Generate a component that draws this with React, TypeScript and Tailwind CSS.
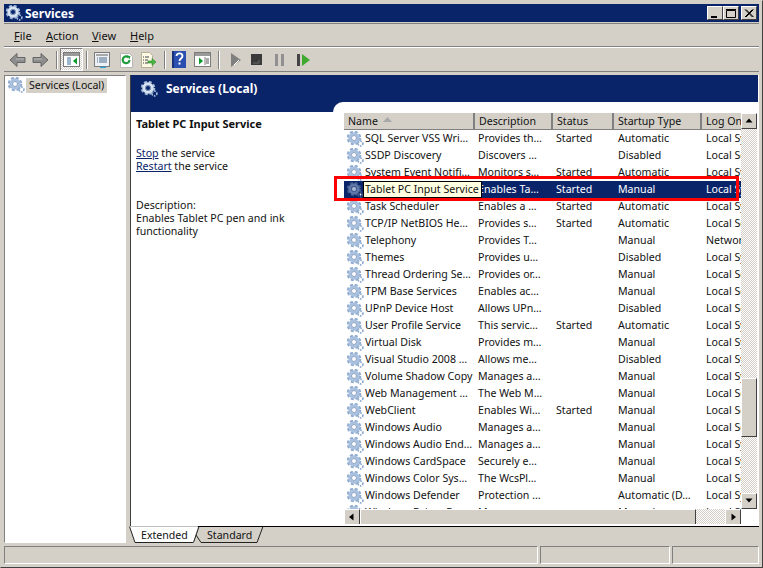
import React from "react";

const FONT = "font-['Noto_Sans','Liberation_Sans',sans-serif]";

type Row = [string, string, string, string, string];
const rows: Row[] = [
  ["SQL Server VSS Wri…", "Provides th…", "Started", "Automatic", "Local System"],
  ["SSDP Discovery", "Discovers …", "", "Disabled", "Local Service"],
  ["System Event Notifi…", "Monitors s…", "Started", "Automatic", "Local System"],
  ["Tablet PC Input Service", "Enables Ta…", "Started", "Manual", "Local System"],
  ["Task Scheduler", "Enables a …", "Started", "Automatic", "Local System"],
  ["TCP/IP NetBIOS He…", "Provides s…", "Started", "Automatic", "Local Service"],
  ["Telephony", "Provides T…", "", "Manual", "Network S"],
  ["Themes", "Provides u…", "", "Disabled", "Local System"],
  ["Thread Ordering Se…", "Provides or…", "", "Manual", "Local Service"],
  ["TPM Base Services", "Enables ac…", "", "Manual", "Local Service"],
  ["UPnP Device Host", "Allows UPn…", "", "Disabled", "Local Service"],
  ["User Profile Service", "This servic…", "Started", "Automatic", "Local System"],
  ["Virtual Disk", "Provides m…", "", "Manual", "Local System"],
  ["Visual Studio 2008 …", "Allows me…", "", "Disabled", "Local System"],
  ["Volume Shadow Copy", "Manages a…", "", "Manual", "Local System"],
  ["Web Management …", "The Web M…", "", "Manual", "Local Service"],
  ["WebClient", "Enables Wi…", "Started", "Manual", "Local Service"],
  ["Windows Audio", "Manages a…", "", "Manual", "Local Service"],
  ["Windows Audio End…", "Manages a…", "", "Manual", "Local System"],
  ["Windows CardSpace", "Securely e…", "", "Manual", "Local System"],
  ["Windows Color Sys…", "The WcsPl…", "", "Manual", "Local Service"],
  ["Windows Defender", "Protection …", "", "Automatic (D…", "Local System"],
  ["Windows Driver Fou…", "Manages …", "", "Manual", "Local System"],
];

function Gear({ tone = "light" }: { tone?: "light" | "dark" | "head" }) {
  const a = tone === "dark" ? "#3f5687" : tone === "head" ? "#9db7d6" : "#8fabcf";
  const b = tone === "dark" ? "#5f76a8" : tone === "head" ? "#d6e2f0" : "#a9c1de";
  const inner = tone === "dark" ? "#aab8d4" : tone === "head" ? "#0a246a" : "#ffffff";
  return (
    <svg width="17" height="16" viewBox="0 0 17 16" className="shrink-0">
      <circle cx="7" cy="7" r="6.2" fill="none" stroke={a} strokeWidth="2.2" strokeDasharray="3 1.87" />
      <circle cx="7" cy="7" r="4.2" fill="none" stroke={b} strokeWidth="3" />
      <circle cx="7" cy="7" r="2.5" fill={inner} stroke={tone === "light" ? "#6f8db5" : a} strokeWidth="0.8" />
      <circle cx="13.5" cy="12.5" r="2.4" fill="none" stroke={a} strokeWidth="1.7" strokeDasharray="1.5 1" />
      <circle cx="13.5" cy="12.5" r="0.9" fill={tone === "head" ? "#0a246a" : "#fff"} />
    </svg>
  );
}

function WinBtn({ kind }: { kind: "min" | "max" | "close" }) {
  return (
    <div className="flex h-[14px] w-[16px] items-center justify-center border border-b-[#404040] border-l-white border-r-[#404040] border-t-white bg-[#d4d0c8]">
      <svg width="12" height="11" viewBox="0 0 12 11">
        {kind === "min" && <rect x="2" y="8" width="6" height="2" fill="#000" />}
        {kind === "max" && <path d="M1.5 2.5h9v7h-9z M1 1.5h10" fill="none" stroke="#000" />}
        {kind === "close" && <path d="M2 1.5l7.5 7.5M3 1.5l7.5 7.5M9.5 1.5L2 9M10.5 1.5L3 9" stroke="#000" fill="none" />}
      </svg>
    </div>
  );
}

function Sep({ ml }: { ml: string }) {
  return <div className={`h-[18px] w-[2px] border-l border-r border-l-[#808080] border-r-white ${ml}`} />;
}

function Arrow({ right = false }: { right?: boolean }) {
  return (
    <svg width="17" height="16" viewBox="0 0 17 16" className="shrink-0">
      <path
        d={right ? "M1 5.5h8V1.5l7 6.5-7 6.5v-4H1z" : "M16 5.5H8V1.5L1 8l7 6.5v-4h8z"}
        fill="#8d8d8d"
        stroke="#666"
      />
      <path d={right ? "M2 7h8" : "M15 7H7"} stroke="#b8b8b8" />
    </svg>
  );
}

function ListPaneIcon({ green = "left" }: { green?: "left" | "mid" }) {
  return (
    <svg width="17" height="15" viewBox="0 0 17 15" className="shrink-0">
      <rect x="0.5" y="0.5" width="16" height="14" fill="#fff" stroke="#7a7a7a" />
      <rect x="1" y="1" width="15" height="3" fill="#9a9a9a" />
      {green === "left" ? (
        <>
          <path d="M4 6h4M4 8h4M4 10h4M4 12h4" stroke="#3d6f9e" />
          <path d="M14 5.5v7l-4-3.5z" fill="#0d9b2c" />
        </>
      ) : (
        <>
          <path d="M5 5.5v7l4-3.5z" fill="#0d9b2c" />
          <path d="M11 5v8" stroke="#7a7a7a" />
          <path d="M12 7h3M12 9h3M12 11h3" stroke="#555" />
        </>
      )}
    </svg>
  );
}

function Toolbar() {
  return (
    <div className="flex h-[25px] shrink-0 items-center border-b border-b-[#808080] border-t border-t-white bg-[#d4d0c8]">
      <div className="ml-[5px] flex items-center gap-[6px]">
        <Arrow />
        <Arrow right />
      </div>
      <Sep ml="ml-[7px]" />
      <div className="ml-[2px] flex h-[23px] w-[23px] items-center justify-center border border-b-white border-l-[#808080] border-r-white border-t-[#808080] bg-[repeating-conic-gradient(#d4d0c8_0_25%,#ffffff_0_50%)] bg-[length:2px_2px]">
        <ListPaneIcon />
      </div>
      <Sep ml="ml-[3px]" />
      <svg width="16" height="16" viewBox="0 0 16 16" className="ml-[6px] shrink-0">
        <rect x="0.5" y="0.5" width="15" height="14" fill="#eef1f5" stroke="#7a7a7a" />
        <rect x="2" y="2" width="12" height="2" fill="#a8a8a8" />
        <path d="M3 6h1M5 6h8M3 8h1M5 8h8M3 10h1M5 10h8" stroke="#4a6a8a" />
        <path d="M6 15.5h6" stroke="#2aa7d8" strokeWidth="1.5" />
      </svg>
      <svg width="15" height="16" viewBox="0 0 15 16" className="ml-[9px] shrink-0">
        <path d="M1.5 1.5h9l3 3v11h-12z" fill="#fff" stroke="#b6b6b6" />
        <path d="M10.5 8a3.4 3.4 0 1 1-1-2.6" fill="none" stroke="#1f9c3c" strokeWidth="2.2" />
        <path d="M8 3.5l3.5 0.5-1 3.5z" fill="#1f9c3c" />
      </svg>
      <svg width="17" height="16" viewBox="0 0 17 16" className="ml-[6px] shrink-0">
        <path d="M1.5 0.5h8l3 3v12h-11z" fill="#fbf8e3" stroke="#b8b090" />
        <path d="M3 5h1M5 5h4M3 8h1M5 8h3M3 11h1M5 11h3" stroke="#444" />
        <path d="M8 9h4V6.5l4 3.5-4 3.5V11H8z" fill="#47b53f" stroke="#2b8f2b" strokeWidth="0.6" />
      </svg>
      <Sep ml="ml-[7px]" />
      <svg width="14" height="17" viewBox="0 0 14 17" className="ml-[6px] shrink-0">
        <rect width="14" height="17" fill="#2a4fb0" />
        <rect x="0" y="0" width="2" height="17" fill="#16307a" />
        <path d="M4.5 5c0-3.5 6-3.5 6 0 0 2.5-3 2.5-3 5" fill="none" stroke="#fff" strokeWidth="1.8" />
        <rect x="6.5" y="11.5" width="2" height="2" fill="#fff" />
      </svg>
      <div className="ml-[8px]">
        <ListPaneIcon green="mid" />
      </div>
      <Sep ml="ml-[7px]" />
      <svg width="11" height="14" viewBox="0 0 11 14" className="ml-[11px] shrink-0">
        <path d="M0 0l10 7-10 7z" fill="#808080" />
        <path d="M8 7l-5 5" stroke="#fff" />
      </svg>
      <svg width="11" height="11" viewBox="0 0 11 11" className="ml-[9px] shrink-0">
        <rect width="11" height="11" fill="#3a3a3a" />
        <path d="M2 9h6M8 9V6" stroke="#6a6a6a" />
      </svg>
      <svg width="9" height="12" viewBox="0 0 9 12" className="ml-[13px] shrink-0">
        <rect width="3" height="12" fill="#909090" />
        <rect x="6" width="3" height="12" fill="#909090" />
      </svg>
      <svg width="13" height="12" viewBox="0 0 13 12" className="ml-[13px] shrink-0">
        <rect width="3" height="12" fill="#444" />
        <path d="M5 0l8 6-8 6z" fill="#3fa92f" />
      </svg>
    </div>
  );
}

function SbBtn({ dir }: { dir: "up" | "down" | "left" | "right" }) {
  const d = {
    up: "M4 1.5L0.5 5.5h7z",
    down: "M4 5.5L0.5 1.5h7z",
    left: "M1 4L5.5 0.5v7z",
    right: "M7 4L2.5 0.5v7z",
  }[dir];
  return (
    <div className="flex h-[16px] w-[16px] shrink-0 items-center justify-center border border-b-[#404040] border-l-white border-r-[#404040] border-t-white bg-[#d4d0c8]">
      <svg width="8" height="8" viewBox="0 0 8 8">
        <path d={d} fill="#000" />
      </svg>
    </div>
  );
}

const dither =
  "bg-[repeating-conic-gradient(#d4d0c8_0_25%,#ffffff_0_50%)] bg-[length:2px_2px]";
const cols = "grid grid-cols-[131px_78px_61px_88px_39px]";

function HeadCell({ children, sort }: { children: React.ReactNode; sort?: boolean }) {
  return (
    <div className="relative flex h-[17px] items-center overflow-hidden whitespace-nowrap border-b border-r-2 border-b-[#808080] border-r-[#808080] bg-[#d4d0c8] pl-[4px]">
      {children}
      {sort && (
        <svg width="9" height="5" viewBox="0 0 9 5" className="absolute left-[39px] top-[4px]">
          <path d="M4.5 0L9 5H0z" fill="#a8a8a8" />
        </svg>
      )}
    </div>
  );
}

function ServiceRow({ r }: { r: Row }) {
  const sel = r[0].startsWith("Tablet");
  return (
    <div className={`${cols} relative h-[17px] items-center whitespace-nowrap ${sel ? "bg-[#0a246a] text-white" : "text-[#111]"}`}>
      <div className="flex items-center gap-[1px] pl-[3px]">
        <Gear tone={sel ? "dark" : "light"} />
        {!sel && <span>{r[0]}</span>}
      </div>
      <div className="overflow-hidden pl-[3px]">{r[1]}</div>
      <div className="pl-[3px]">{r[2]}</div>
      <div className="pl-[4px]">{r[3]}</div>
      <div className="overflow-hidden pl-[4px]">{r[4]}</div>
    </div>
  );
}

export default function App() {
  return (
    <div className={`${FONT} flex h-[568px] w-[763px] flex-col overflow-hidden border-b border-l border-r border-t border-b-[#404040] border-l-[#d4d0c8] border-r-[#404040] border-t-[#d4d0c8] bg-[#d4d0c8] p-[3px] text-[10.6px] leading-[13px] text-[#111]`}>
      {/* title bar */}
      <div className="flex h-[18px] shrink-0 items-center bg-[#0a246a] pl-[2px] pr-[2px]">
        <Gear tone="head" />
        <span className="ml-[2px] text-[12px] font-bold text-white">Services</span>
        <div className="ml-auto flex items-center">
          <WinBtn kind="min" />
          <WinBtn kind="max" />
          <div className="ml-[2px]">
            <WinBtn kind="close" />
          </div>
        </div>
      </div>

      {/* menu */}
      <div className="mt-[1px] flex h-[24px] shrink-0 items-center border-b border-t border-b-[#808080] border-t-[#808080] bg-[#d4d0c8] pl-[10px] text-[11px] text-[#111]">
        <span className="w-[32px]"><u>F</u>ile</span>
        <span className="w-[46px]"><u>A</u>ction</span>
        <span className="w-[38px]"><u>V</u>iew</span>
        <span><u>H</u>elp</span>
      </div>

      <Toolbar />

      {/* body */}
      <div className="mt-[3px] flex min-h-0 flex-1">
        {/* tree */}
        <div className="h-[468px] w-[122px] shrink-0 border border-b-white border-l-[#808080] border-r-white border-t-[#808080] bg-white">
          <div className="flex items-center gap-[1px] pl-[3px] pt-[1px]">
            <Gear />
            <span className="bg-[#d4d0c8] px-[3px] py-[1px]">Services (Local)</span>
          </div>
        </div>

        {/* main */}
        <div className="ml-[4px] flex h-[468px] min-w-0 flex-1 flex-col">
          <div className="flex h-[451px] flex-col border-l border-r border-l-[#404040] border-r-white bg-white">
            <div className="flex h-[37px] shrink-0 items-start gap-[8px] bg-[#0a246a] pl-[10px] pt-[6px]">
              <Gear tone="head" />
              <span className="text-[12px] font-bold leading-[16px] text-white">Services (Local)</span>
            </div>
            <div className="flex min-h-0 flex-1">
              <div className="w-[202px] shrink-0 pl-[5px] pt-[5px]">
                <div className="text-[11px] font-bold">Tablet PC Input Service</div>
                <div className="mt-[17px]"><span className="text-[#0a246a] underline">Stop</span> the service</div>
                <div><span className="text-[#0a246a] underline">Restart</span> the service</div>
                <div className="mt-[26px]">Description:</div>
                <div>Enables Tablet PC pen and ink functionality</div>
              </div>
              <div className="relative z-10 -mt-[10px] min-w-0 flex-1 rounded-tl-[10px] bg-white pl-[11px] pt-[11px]">
                <div className="flex">
                  <div className="relative h-[411px] w-[397px] shrink-0 overflow-hidden">
                    <div className={cols}>
                      <HeadCell sort>Name</HeadCell>
                      <HeadCell>Description</HeadCell>
                      <HeadCell>Status</HeadCell>
                      <HeadCell>Startup Type</HeadCell>
                      <div className="flex h-[17px] items-center overflow-hidden whitespace-nowrap border-b border-b-[#808080] bg-[#d4d0c8] pl-[4px]">Log On As</div>
                    </div>
                    <div className="h-[379px] overflow-hidden">
                      {rows.map((r) => (
                        <ServiceRow key={r[0]} r={r} />
                      ))}
                    </div>
                    <div className="flex h-[15px] items-start">
                      <SbBtn dir="left" />
                      <div className="h-[16px] w-[336px] border border-b-[#404040] border-l-white border-r-[#404040] border-t-white bg-[#d4d0c8]" />
                      <div className={`h-[16px] flex-1 ${dither}`} />
                      <SbBtn dir="right" />
                    </div>
                  </div>
                  <div className="flex h-[396px] w-[16px] shrink-0 flex-col">
                    <SbBtn dir="up" />
                    <div className={`h-[249px] ${dither}`} />
                    <div className="h-[59px] border border-b-[#404040] border-l-white border-r-[#404040] border-t-white bg-[#d4d0c8]" />
                    <div className={`flex-1 ${dither}`} />
                    <SbBtn dir="down" />
                  </div>
                </div>
                {/* tooltip over selected row */}
                <div className="absolute left-[30px] top-[79px] flex h-[17px] w-[119px] items-center whitespace-nowrap border border-black bg-[#ffffe1] pl-[1px] text-[#111]">
                  Tablet PC Input Service
                </div>
                {/* red annotation */}
                <div className="absolute left-[1px] top-[74px] h-[25px] w-[405px] border-[3px] border-[#ff0000]" />
              </div>
            </div>
          </div>

          {/* tabs */}
          <div className="relative h-[17px] shrink-0 border-t border-t-black bg-[#d4d0c8]">
            <svg width="140" height="17" viewBox="0 0 140 17" className="absolute -left-[1px] -top-[1px]">
              <path d="M0.5 0.5L6 16.5H64L69 0.5z" fill="#fff" stroke="none" />
              <path d="M0.5 0.5L6 16.5H64" fill="none" stroke="#222" />
              <path d="M64.5 16.5L70 0.5" fill="none" stroke="#222" />
              <path d="M67 9L72 16.5H128L134 0.5" fill="none" stroke="#222" />
              <path d="M0.5 0h68" stroke="#fff" />
            </svg>
            <span className="absolute left-[11px] top-[2px]">Extended</span>
            <span className="absolute left-[77px] top-[2px]">Standard</span>
          </div>
        </div>
      </div>

      {/* status bar */}
      <div className="mt-[3px] flex h-[18px] shrink-0 gap-[2px]">
        <div className="w-[534px] border border-b-white border-l-[#808080] border-r-white border-t-[#808080]" />
        <div className="w-[130px] border border-b-white border-l-[#808080] border-r-white border-t-[#808080]" />
        <div className="flex-1 border border-b-white border-l-[#808080] border-r-white border-t-[#808080]" />
      </div>
    </div>
  );
}
